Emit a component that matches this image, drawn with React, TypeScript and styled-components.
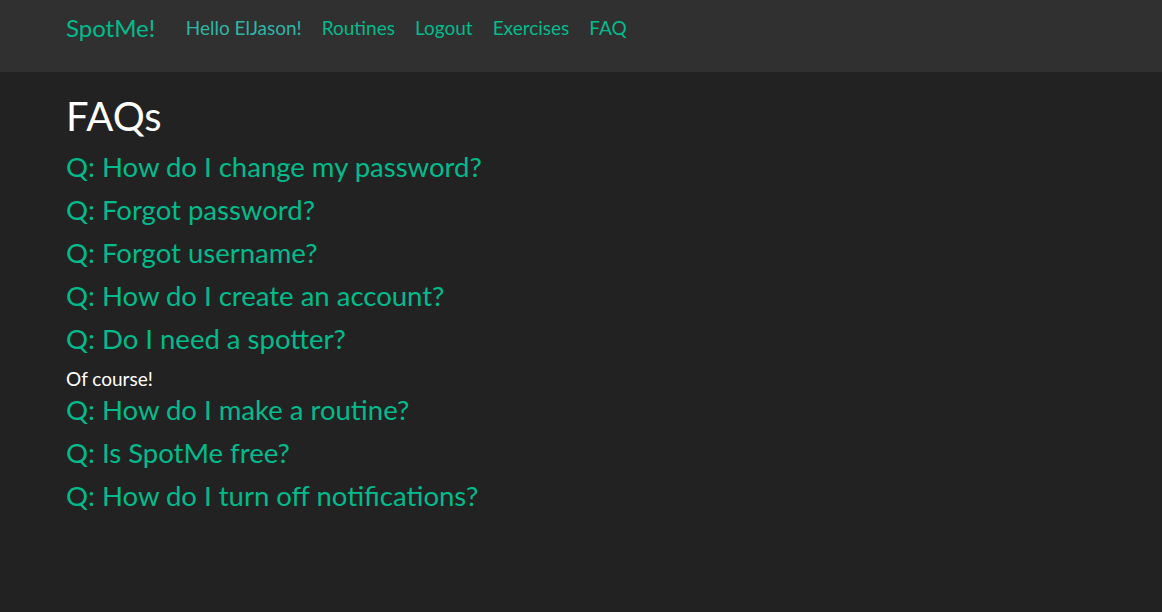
import React from "react";
import styled, { createGlobalStyle } from "styled-components";

const Global = createGlobalStyle`
  html, body { margin: 0; padding: 0; background: #222222; }
  body { font-family: Lato, "Open Sans", sans-serif; color: #ffffff; }
`;

const Navbar = styled.nav`
  height: 72px;
  background: #303030;
  display: flex;
  align-items: flex-start;
  padding: 0 0 0 66px;
  box-sizing: border-box;
`;

const Brand = styled.a`
  font-size: 24px;
  line-height: 56px;
  color: #00bc8c;
  text-decoration: none;
  margin-right: 20.5px;
`;

const NavLinks = styled.ul`
  display: flex;
  list-style: none;
  margin: 0;
  padding: 0;
`;

const NavLink = styled.a<{ $teal?: boolean }>`
  display: block;
  font-size: 19px;
  line-height: 56px;
  padding: 0 10px;
  color: ${(p) => (p.$teal ? "#2fb5a5" : "#00bc8c")};
  text-decoration: none;
`;

const Main = styled.main`
  padding: 21px 66px 0;
`;

const Title = styled.h1`
  font-size: 40px;
  font-weight: 400;
  line-height: 46px;
  margin: 0 0 12px;
  color: #ffffff;
`;

const Question = styled.h3`
  font-size: 27.5px;
  font-weight: 400;
  line-height: 31px;
  margin: 0 0 12px;
  color: #00bc8c;
`;

const Answer = styled.p`
  font-size: 19px;
  line-height: 25px;
  margin: 0 0 3px;
  color: #ffffff;
`;

const faqs: { q: string; a?: string }[] = [
  { q: "Q: How do I change my password?" },
  { q: "Q: Forgot password?" },
  { q: "Q: Forgot username?" },
  { q: "Q: How do I create an account?" },
  { q: "Q: Do I need a spotter?", a: "Of course!" },
  { q: "Q: How do I make a routine?" },
  { q: "Q: Is SpotMe free?" },
  { q: "Q: How do I turn off notifications?" },
];

export default function App() {
  return (
    <>
      <Global />
      <Navbar>
        <Brand>SpotMe!</Brand>
        <NavLinks>
          <li><NavLink $teal>Hello ElJason!</NavLink></li>
          <li><NavLink>Routines</NavLink></li>
          <li><NavLink>Logout</NavLink></li>
          <li><NavLink>Exercises</NavLink></li>
          <li><NavLink>FAQ</NavLink></li>
        </NavLinks>
      </Navbar>
      <Main>
        <Title>FAQs</Title>
        {faqs.map((f) => (
          <React.Fragment key={f.q}>
            <Question>{f.q}</Question>
            {f.a && <Answer>{f.a}</Answer>}
          </React.Fragment>
        ))}
      </Main>
    </>
  );
}
